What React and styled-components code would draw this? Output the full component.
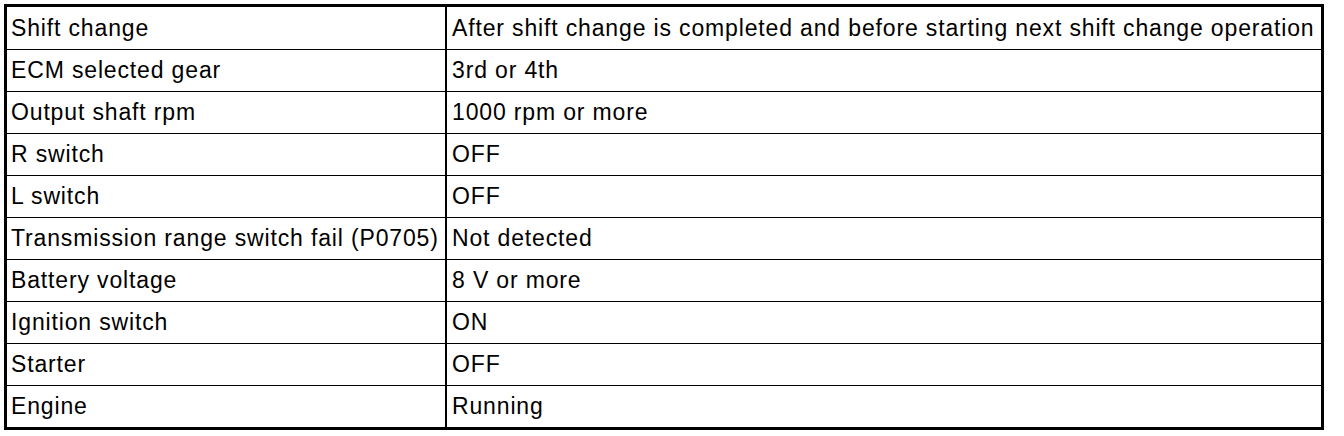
import React from "react";
import styled, { createGlobalStyle } from "styled-components";

const GlobalStyle = createGlobalStyle`
  body {
    margin: 0;
    padding: 4px;
    background: #fff;
  }
`;

const rows = [
  ["Shift change", "After shift change is completed and before starting next shift change operation"],
  ["ECM selected gear", "3rd or 4th"],
  ["Output shaft rpm", "1000 rpm or more"],
  ["R switch", "OFF"],
  ["L switch", "OFF"],
  ["Transmission range switch fail (P0705)", "Not detected"],
  ["Battery voltage", "8 V or more"],
  ["Ignition switch", "ON"],
  ["Starter", "OFF"],
  ["Engine", "Running"],
];

const Table = styled.div`
  width: 1320px;
  box-sizing: border-box;
  border: 3px solid #000;
  display: grid;
  grid-template-columns: 440px 1fr;
  font-family: "Liberation Sans", Arial, sans-serif;
  font-size: 23px;
  letter-spacing: 0.85px;
  color: #000;
`;

const Cell = styled.div`
  height: 42px;
  box-sizing: border-box;
  display: flex;
  align-items: center;
  padding: 0 0 0 ${(p) => (p.$first ? "4px" : "5px")};
  border-top: ${(p) => (p.$top ? "none" : "1px solid #000")};
  border-right: ${(p) => (p.$first ? "2px solid #000" : "none")};
  white-space: nowrap;
  overflow: hidden;
`;

export default function App() {
  return (
    <>
      <GlobalStyle />
      <Table>
        {rows.map(([label, value], i) => (
          <React.Fragment key={label}>
            <Cell $first $top={i === 0}>{label}</Cell>
            <Cell $top={i === 0}>{value}</Cell>
          </React.Fragment>
        ))}
      </Table>
    </>
  );
}
